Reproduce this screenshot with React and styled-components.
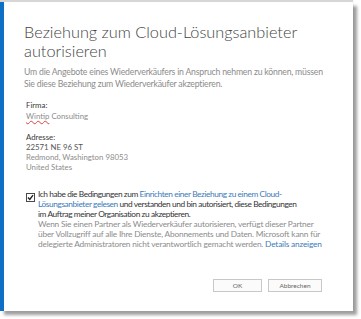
import React from "react";
import styled, { createGlobalStyle } from "styled-components";

const Global = createGlobalStyle`
  html, body { margin: 0; padding: 0; background: #ffffff; }
  body { font-family: Lato, "Open Sans", sans-serif; }
`;

const Page = styled.div`
  width: 361px;
  height: 319px;
  overflow: hidden;
  padding-top: 2px;
  box-sizing: border-box;
`;

const Dialog = styled.div`
  width: 353px;
  height: 309px;
  box-sizing: border-box;
  background: #ffffff;
  border-left: 4px solid #0f6fc6;
  box-shadow: 0 -2px 1px rgba(0, 0, 0, 0.16), 4px 4px 3px rgba(0, 0, 0, 0.38);
  padding: 20px 31px 0 20px;
  display: flex;
  flex-direction: column;
  white-space: nowrap;
`;

const Title = styled.h1`
  margin: 0;
  font-weight: 300;
  font-size: 16.3px;
  line-height: 19px;
  color: #444444;
`;

const Intro = styled.p`
  margin: 6px 0 0;
  font-size: 8.7px;
  line-height: 12px;
  letter-spacing: -0.2px;
  color: #8c8c8c;
`;

const Field = styled.div`
  margin: ${(p) => p.$top}px 0 0 2px;
  font-size: 7.8px;
  line-height: ${(p) => p.$lh}px;
`;

const Label = styled.div`
  color: #3a3a3a;
`;

const Value = styled.div`
  color: ${(p) => (p.$dark ? "#555555" : "#8c8c8c")};
`;

const Misspelled = styled.span`
  text-decoration: underline wavy #e04040;
  text-decoration-thickness: 1px;
  text-underline-offset: 1px;
`;

const Consent = styled.div`
  margin: 17px 0 0 2px;
  display: flex;
  gap: 3px;
  align-items: flex-start;
`;

const Box = styled.span`
  flex: none;
  width: 9px;
  height: 9px;
  margin-top: 4px;
  box-sizing: border-box;
  border: 1px solid #4a4a4a;
  background: #ffffff;
  display: flex;
  align-items: center;
  justify-content: center;
`;

const ConsentText = styled.div`
  font-size: 8.3px;
  line-height: 10px;
  letter-spacing: -0.4px;
  color: #333333;
`;

const Note = styled.div`
  letter-spacing: -0.18px;
  color: #8c8c8c;
`;

const Link = styled.a`
  color: #3d7ab8;
  text-decoration: none;
`;

const Buttons = styled.div`
  margin-top: 30px;
  display: flex;
  justify-content: flex-end;
  gap: 6px;
`;

const Button = styled.button`
  width: ${(p) => p.$w}px;
  height: 13px;
  padding: 0;
  box-sizing: border-box;
  border: 1px solid #c8c8c8;
  background: #fbfbfb;
  font-family: Lato, "Open Sans", sans-serif;
  font-size: 6.5px;
  line-height: 11px;
  color: #666666;
`;

export default function App() {
  return (
    <>
      <Global />
      <Page>
        <Dialog>
          <Title>
            Beziehung zum Cloud-Lösungsanbieter
            <br />
            autorisieren
          </Title>
          <Intro>
            Um die Angebote eines Wiederverkäufers in Anspruch nehmen zu können, müssen
            <br />
            Sie diese Beziehung zum Wiederverkäufer akzeptieren.
          </Intro>
          <Field $top={10} $lh={11}>
            <Label>Firma:</Label>
            <Value>
              <Misspelled>Wintip</Misspelled> Consulting
            </Value>
          </Field>
          <Field $top={10} $lh={10}>
            <Label>Adresse:</Label>
            <Value $dark>22571 NE 96 ST</Value>
            <Value>Redmond, Washington 98053</Value>
            <Value>United States</Value>
          </Field>
          <Consent>
            <Box>
              <svg width="7" height="7" viewBox="0 0 7 7">
                <path d="M1 3.6 L2.8 5.4 L6 1.2" fill="none" stroke="#222" strokeWidth="1.4" />
              </svg>
            </Box>
            <ConsentText>
              Ich habe die Bedingungen zum <Link>Einrichten einer Beziehung zu einem Cloud-</Link>
              <br />
              <Link>Lösungsanbieter gelesen</Link> und verstanden und bin autorisiert, diese Bedingungen
              <br />
              im Auftrag meiner Organisation zu akzeptieren.
              <Note>
                Wenn Sie einen Partner als Wiederverkäufer autorisieren, verfügt dieser Partner
                <br />
                über Vollzugriff auf alle Ihre Dienste, Abonnements und Daten. Microsoft kann für
                <br />
                delegierte Administratoren nicht verantwortlich gemacht werden. <Link>Details anzeigen</Link>
              </Note>
            </ConsentText>
          </Consent>
          <Buttons>
            <Button $w={49}>OK</Button>
            <Button $w={54}>Abbrechen</Button>
          </Buttons>
        </Dialog>
      </Page>
    </>
  );
}
